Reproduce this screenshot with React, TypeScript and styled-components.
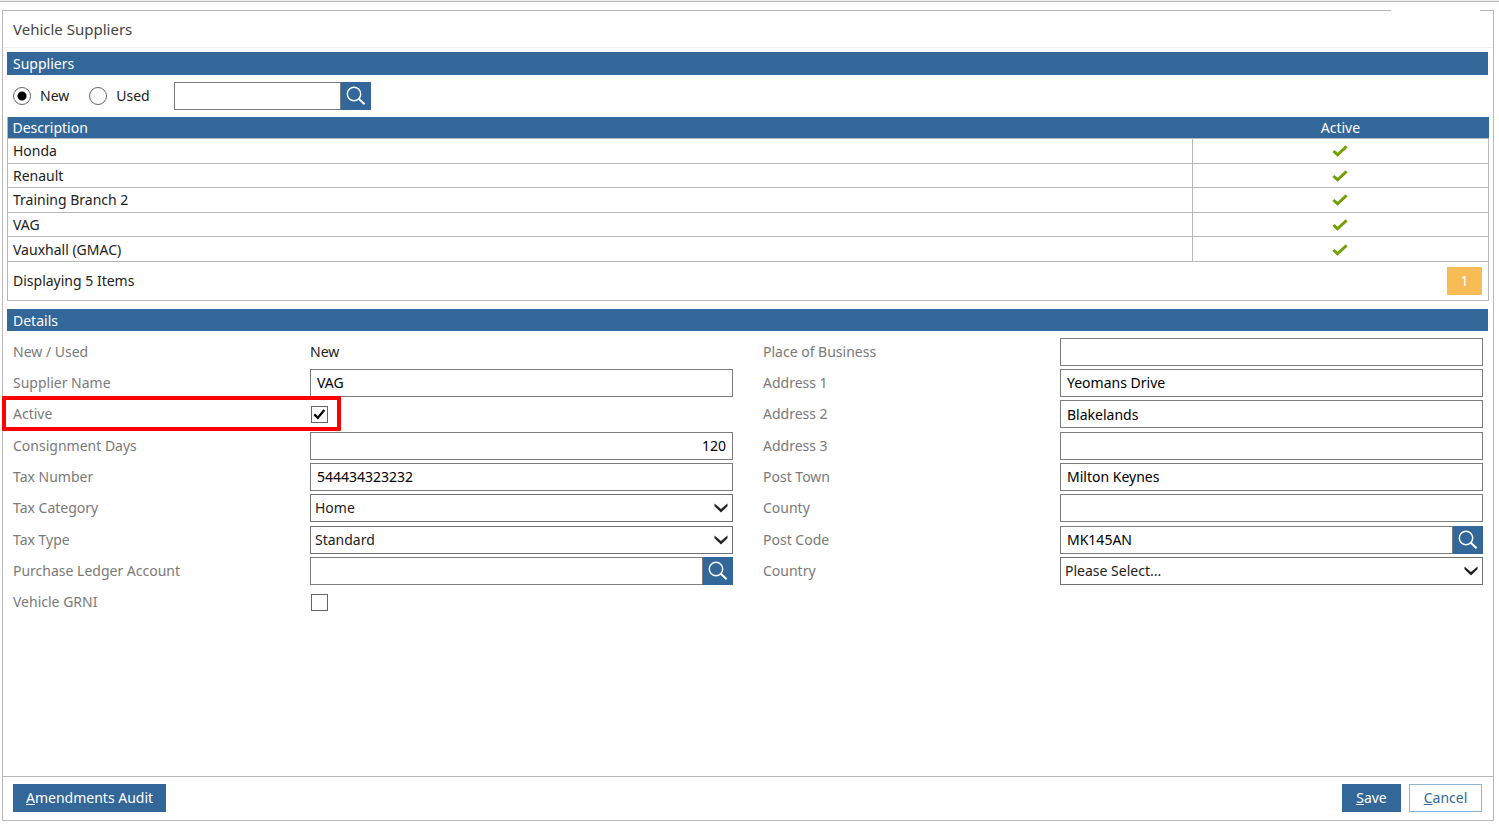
import React, { useState } from "react";
import styled, { createGlobalStyle, css } from "styled-components";

const blue = "#336799";
const line = "#b8b8b8";
const fieldLine = "#7d7d7d";

const GlobalStyle = createGlobalStyle`
  * { box-sizing: border-box; }
  body {
    margin: 0;
    background: #fff;
    color: #222;
    font-family: "Noto Sans", Tahoma, sans-serif;
    font-size: 14px;
    line-height: 20px;
  }
  button, input, select { font: inherit; color: inherit; margin: 0; }
`;

const Page = styled.div`
  display: flex;
  flex-direction: column;
  min-height: 100vh;
  padding: 9px 5px 10px 2px;
  border-top: 1px solid #f0f0f0;
  box-shadow: inset 0 1px 0 #bcbcbc;
`;

const Panel = styled.main`
  position: relative;
  flex: 1;
  display: flex;
  flex-direction: column;
  border: 1px solid ${line};
  &::before {
    content: "";
    position: absolute;
    top: -2px;
    right: 13px;
    width: 89px;
    height: 3px;
    background: #fff;
  }
`;

const Title = styled.h1`
  margin: 0;
  padding: 5px 10px;
  border-bottom: 1px solid #f0f0f0;
  color: #444;
  font-size: 15px;
  font-weight: 400;
  line-height: 26px;
`;

const Content = styled.div`
  flex: 1;
  padding: 4px 5px 0 4px;
`;

const SectionBar = styled.h2<{ $slim?: boolean }>`
  margin: 0;
  padding: ${(p) => (p.$slim ? "1px 6px 0" : "1px 6px")};
  background: ${blue};
  color: #fff;
  font-size: 14px;
  font-weight: 400;
  line-height: 21px;
`;

const Filters = styled.div`
  display: flex;
  align-items: center;
  padding: 7px 6px;
`;

const Choice = styled.label`
  display: flex;
  align-items: center;
  gap: 9px;
  margin-right: 20px;
`;

const Radio = styled.input.attrs({ type: "radio" })`
  appearance: none;
  width: 18px;
  height: 18px;
  border: 1px solid #666;
  border-radius: 50%;
  background: #fff;
  &:checked { background: radial-gradient(circle, #000 4px, #fff 5px); }
`;

const LookupBox = styled.div<{ $narrow?: boolean }>`
  display: flex;
  width: ${(p) => (p.$narrow ? "197px" : "100%")};
  ${(p) => p.$narrow && css`margin-left: 4px;`}
`;

const TextBox = styled.input<{ $right?: boolean }>`
  flex: 1;
  width: 100%;
  min-width: 0;
  height: 28px;
  padding: 0 6px;
  border: 1px solid ${fieldLine};
  border-radius: 0;
  background: #fff;
  color: #000;
  text-align: ${(p) => (p.$right ? "right" : "left")};
`;

const LookupButton = styled.button`
  display: flex;
  align-items: center;
  justify-content: center;
  width: 30px;
  height: 28px;
  padding: 0;
  border: 0;
  background: ${blue};
  color: #fff;
`;

const Grid = styled.div`
  margin-right: -1px;
  border: 1px solid ${line};
  border-top: 0;
`;

const Table = styled.table`
  width: calc(100% + 2px);
  margin: 0 -1px;
  height: 145px;
  border-collapse: collapse;
  table-layout: fixed;
`;

const HeadCell = styled.th<{ $center?: boolean }>`
  height: 21px;
  width: ${(p) => (p.$center ? "20%" : "auto")};
  padding: 1px 5px 0;
  background: ${blue};
  color: #fff;
  font-weight: 400;
  line-height: 20px;
  text-align: ${(p) => (p.$center ? "center" : "left")};
`;

const Cell = styled.td<{ $center?: boolean }>`
  padding: 1px 5px 0;
  border: 1px solid ${line};
  text-align: ${(p) => (p.$center ? "center" : "left")};
  svg { display: block; margin: 0 auto; }
`;

const Pager = styled.div`
  display: flex;
  align-items: center;
  justify-content: space-between;
  padding: 5px 6px 5px 5px;
`;

const PageButton = styled.button`
  width: 35px;
  height: 28px;
  padding: 0;
  border: 0;
  background: #f7bc55;
  color: #fff;
`;

const Details = styled.section`
  margin-top: 8px;
`;

const FormColumns = styled.form`
  display: grid;
  grid-template-columns: 1fr 1fr;
  column-gap: 30px;
  padding: 5px 5px 20px 6px;
`;

const FormColumn = styled.div`
  display: grid;
  grid-template-rows: repeat(9, 1fr);
  height: 282px;
`;

const FormRow = styled.div`
  position: relative;
  display: flex;
  align-items: center;
`;

const Label = styled.label`
  flex: 0 0 41.25%;
  color: #7a7a7a;
`;

const Control = styled.div`
  position: relative;
  flex: 1;
  display: flex;
  align-items: center;
  min-width: 0;
`;

const Highlight = styled.div`
  position: absolute;
  top: -3px;
  bottom: -1px;
  left: -11px;
  width: calc(41.25% + 42px);
  border: 4px solid #fe0000;
  border-radius: 1px;
  pointer-events: none;
`;

const CheckSlot = styled.span`
  position: relative;
  display: flex;
  margin-left: 1px;
  svg { position: absolute; top: 3px; left: 2px; pointer-events: none; }
`;

const CheckBox = styled.input.attrs({ type: "checkbox" })`
  appearance: none;
  width: 17px;
  height: 17px;
  border: 1px solid #666;
  background: #fff;
`;

const Select = styled.select`
  appearance: none;
  width: 100%;
  height: 28px;
  padding: 0 24px 0 4px;
  border: 1px solid #707070;
  border-radius: 0;
  background: #fff;
`;

const ArrowSlot = styled.span`
  position: absolute;
  right: 5px;
  display: flex;
  pointer-events: none;
`;

const Footer = styled.footer`
  display: flex;
  gap: 8px;
  padding: 7px 11px 8px 10px;
  border-top: 1px solid ${line};
`;

const ActionButton = styled.button<{ $outline?: boolean; $first?: boolean }>`
  height: 28px;
  min-width: ${(p) => (p.$outline ? "73px" : "59px")};
  padding: 0 12px;
  border: 1px solid ${(p) => (p.$outline ? "#8db4d9" : blue)};
  background: ${(p) => (p.$outline ? "#fff" : blue)};
  color: ${(p) => (p.$outline ? blue : "#fff")};
  margin-right: ${(p) => (p.$first ? "auto" : "0")};
`;

const SearchIcon = () => (
  <svg width="20" height="20" viewBox="0 0 20 20" fill="none" stroke="currentColor">
    <circle cx="8" cy="8" r="6.7" strokeWidth="1.4" />
    <path d="M12.8 12.8L18.6 18.3" strokeWidth="2" />
  </svg>
);

const GreenTick = () => (
  <svg width="16" height="12" viewBox="0 0 16 12" fill="none" stroke="#72a004" strokeWidth="2.9">
    <path d="M1.4 6L5.5 9.7L14.6 1.4" />
  </svg>
);

const BlackTick = () => (
  <svg width="13" height="11" viewBox="0 0 13 11" fill="none" stroke="#000" strokeWidth="2.3">
    <path d="M1.3 5.4L4.8 8.9L11.3 1" />
  </svg>
);

const Arrow = () => (
  <svg width="14" height="10" viewBox="0 0 14 10" fill="#222">
    <path d="M0.5 0.4L7 6.1L13.5 0.4V3.2L7 9.4L0.5 3.2Z" />
  </svg>
);

type Field = {
  id: string;
  label: string;
  kind: "static" | "text" | "number" | "check" | "select" | "lookup";
  value?: string;
  checked?: boolean;
  highlighted?: boolean;
};

const leftFields: Field[] = [
  { id: "kind", label: "New / Used", kind: "static", value: "New" },
  { id: "name", label: "Supplier Name", kind: "text", value: "VAG" },
  { id: "active", label: "Active", kind: "check", checked: true, highlighted: true },
  { id: "days", label: "Consignment Days", kind: "number", value: "120" },
  { id: "tax-number", label: "Tax Number", kind: "text", value: "544434323232" },
  { id: "tax-category", label: "Tax Category", kind: "select", value: "Home" },
  { id: "tax-type", label: "Tax Type", kind: "select", value: "Standard" },
  { id: "ledger", label: "Purchase Ledger Account", kind: "lookup" },
  { id: "grni", label: "Vehicle GRNI", kind: "check" },
];

const rightFields: Field[] = [
  { id: "place", label: "Place of Business", kind: "text" },
  { id: "address1", label: "Address 1", kind: "text", value: "Yeomans Drive" },
  { id: "address2", label: "Address 2", kind: "text", value: "Blakelands" },
  { id: "address3", label: "Address 3", kind: "text" },
  { id: "town", label: "Post Town", kind: "text", value: "Milton Keynes" },
  { id: "county", label: "County", kind: "text" },
  { id: "postcode", label: "Post Code", kind: "lookup", value: "MK145AN" },
  { id: "country", label: "Country", kind: "select", value: "Please Select..." },
];

const suppliers = ["Honda", "Renault", "Training Branch 2", "VAG", "Vauxhall (GMAC)"];

function Tick({ id, initial }: { id: string; initial?: boolean }) {
  const [on, setOn] = useState(!!initial);
  return (
    <CheckSlot>
      <CheckBox id={id} checked={on} onChange={(e) => setOn(e.target.checked)} />
      {on && <BlackTick />}
    </CheckSlot>
  );
}

function FieldControl({ field }: { field: Field }) {
  const { id, kind, value, checked, label } = field;
  switch (kind) {
    case "static":
      return <output id={id}>{value}</output>;
    case "check":
      return <Tick id={id} initial={checked} />;
    case "select":
      return (
        <>
          <Select id={id}>
            <option>{value}</option>
          </Select>
          <ArrowSlot><Arrow /></ArrowSlot>
        </>
      );
    case "lookup":
      return (
        <LookupBox>
          <TextBox id={id} defaultValue={value} />
          <LookupButton type="button" aria-label={`Find ${label}`}><SearchIcon /></LookupButton>
        </LookupBox>
      );
    default:
      return <TextBox id={id} defaultValue={value} $right={kind === "number"} />;
  }
}

const Fields = ({ items }: { items: Field[] }) => (
  <FormColumn>
    {items.map((f) => (
      <FormRow key={f.id}>
        <Label htmlFor={f.id}>{f.label}</Label>
        <Control><FieldControl field={f} /></Control>
        {f.highlighted && <Highlight />}
      </FormRow>
    ))}
  </FormColumn>
);

export default function App() {
  return (
    <>
      <GlobalStyle />
      <Page>
        <Panel>
          <Title>Vehicle Suppliers</Title>
          <Content>
            <SectionBar>Suppliers</SectionBar>
            <Filters>
              <Choice><Radio name="stock" defaultChecked />New</Choice>
              <Choice><Radio name="stock" />Used</Choice>
              <LookupBox $narrow>
                <TextBox aria-label="Search suppliers" />
                <LookupButton type="button" aria-label="Search"><SearchIcon /></LookupButton>
              </LookupBox>
            </Filters>
            <Grid>
              <Table>
                <thead>
                  <tr>
                    <HeadCell>Description</HeadCell>
                    <HeadCell $center>Active</HeadCell>
                  </tr>
                </thead>
                <tbody>
                  {suppliers.map((name) => (
                    <tr key={name}>
                      <Cell>{name}</Cell>
                      <Cell $center><GreenTick /></Cell>
                    </tr>
                  ))}
                </tbody>
              </Table>
              <Pager>
                Displaying 5 Items
                <PageButton type="button">1</PageButton>
              </Pager>
            </Grid>
            <Details>
              <SectionBar $slim>Details</SectionBar>
              <FormColumns>
                <Fields items={leftFields} />
                <Fields items={rightFields} />
              </FormColumns>
            </Details>
          </Content>
          <Footer>
            <ActionButton type="button" $first><u>A</u>mendments Audit</ActionButton>
            <ActionButton type="button"><u>S</u>ave</ActionButton>
            <ActionButton type="button" $outline><u>C</u>ancel</ActionButton>
          </Footer>
        </Panel>
      </Page>
    </>
  );
}
